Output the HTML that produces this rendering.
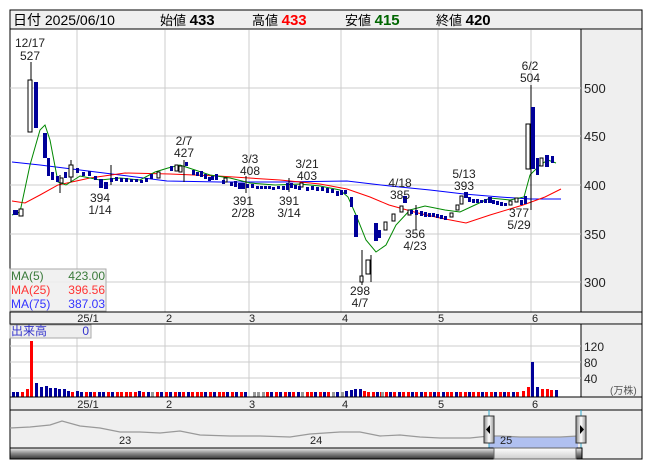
<!DOCTYPE html>
<html><head><meta charset="utf-8">
<style>
body{margin:0;width:653px;height:470px;background:#fff;overflow:hidden;font-family:"Liberation Sans","Noto Sans CJK JP",sans-serif}
svg text{font-family:"Liberation Sans","Noto Sans CJK JP",sans-serif}
</style></head><body>
<svg width="653" height="470" viewBox="0 0 653 470" xmlns="http://www.w3.org/2000/svg">
<defs>
<linearGradient id="sb" x1="0" y1="0" x2="0" y2="1"><stop offset="0" stop-color="#eee"/><stop offset="0.5" stop-color="#888"/><stop offset="1" stop-color="#333"/></linearGradient>
<linearGradient id="th" x1="0" y1="0" x2="0" y2="1"><stop offset="0" stop-color="#fff"/><stop offset="1" stop-color="#ccc"/></linearGradient>
<linearGradient id="hd" x1="0" y1="0" x2="1" y2="0"><stop offset="0" stop-color="#888"/><stop offset="0.5" stop-color="#fff"/><stop offset="1" stop-color="#999"/></linearGradient>
</defs>
<rect x="10" y="10" width="632" height="19" fill="#efefef" stroke="#000"/>
<text x="13" y="25" font-size="14">日付 2025/06/10</text>
<text x="160" y="25" font-size="13">始値 <tspan font-weight="bold" font-size="15">433</tspan></text>
<text x="252" y="25" font-size="13">高値 <tspan font-weight="bold" font-size="15" fill="#f00">433</tspan></text>
<text x="345" y="25" font-size="13">安値 <tspan font-weight="bold" font-size="15" fill="#060">415</tspan></text>
<text x="436" y="25" font-size="13">終値 <tspan font-weight="bold" font-size="15">420</tspan></text>
<rect x="10" y="29" width="632" height="283" fill="#fff" stroke="#000"/>
<rect x="581" y="30" width="60" height="282" fill="#efefef"/>
<line x1="581" y1="29" x2="581" y2="312" stroke="#000"/>
<g stroke="#ccc">
<line x1="77" y1="30" x2="77" y2="312"/><line x1="165" y1="30" x2="165" y2="312"/><line x1="249" y1="30" x2="249" y2="312"/><line x1="341" y1="30" x2="341" y2="312"/><line x1="438" y1="30" x2="438" y2="312"/><line x1="531" y1="30" x2="531" y2="312"/>
<line x1="10" y1="88" x2="581" y2="88"/><line x1="10" y1="136" x2="581" y2="136"/><line x1="10" y1="185" x2="581" y2="185"/><line x1="10" y1="234" x2="581" y2="234"/><line x1="10" y1="282" x2="581" y2="282"/>
</g>
<g font-size="13" fill="#222"><text x="584" y="93">500</text><text x="584" y="141">450</text><text x="584" y="190">400</text><text x="584" y="239">350</text><text x="584" y="287">300</text></g>
<polyline fill="none" stroke="#00f" stroke-width="1" points="12,162 40,165 80,170 120,175 167,181 220,182 280,182 347,181 390,186 430,190 464,194 500,197 530,199 561,199"/>
<polyline fill="none" stroke="#f00" stroke-width="1" points="12,201 25,203 40,195 58,185 90,178 125,173 170,174 218,176 280,180 320,184 347,189 370,197 389,205 418,213 440,218 466,223 490,215 523,205 545,197 561,189"/>
<polyline fill="none" stroke="#080" stroke-width="1" points="12,215 20,212 30,165 40,130 45,125 50,140 58,182 66,185 80,176 100,180 120,178 140,180 155,172 168,168 180,165 195,170 210,175 230,178 250,183 275,185 300,184 320,186 340,190 348,197 356,215 366,240 376,252 386,245 396,225 410,210 425,206 445,210 460,212 475,205 490,198 510,200 524,197 530,175 540,165 548,160 556,163"/>
<g stroke="#000" stroke-width="1">
<line x1="31" y1="62" x2="31" y2="132"/><line x1="531" y1="85" x2="531" y2="172"/><line x1="362" y1="250" x2="362" y2="285"/><line x1="371" y1="255" x2="371" y2="282"/><line x1="416" y1="205" x2="416" y2="230"/><line x1="531" y1="172" x2="531" y2="210"/><line x1="60" y1="175" x2="60" y2="193"/><line x1="71" y1="160" x2="71" y2="182"/><line x1="111" y1="165" x2="111" y2="185"/><line x1="184" y1="160" x2="184" y2="182"/><line x1="246" y1="176" x2="246" y2="193"/><line x1="289" y1="178" x2="289" y2="192"/>
</g>
<g fill="#fff" stroke="#000">
<rect x="19" y="209" width="4" height="7"/><rect x="28" y="80" width="4" height="52"/><rect x="366" y="260" width="4" height="14"/><rect x="360" y="276" width="3" height="6"/><rect x="526" y="124" width="4" height="45"/><rect x="69" y="165" width="4" height="12"/><rect x="60" y="178" width="3" height="5"/>
<rect x="175" y="165" width="3" height="6"/><rect x="400" y="206" width="3" height="6"/><rect x="460" y="196" width="3" height="8"/><rect x="456" y="205" width="3" height="5"/><rect x="515" y="198" width="3" height="4"/><rect x="540" y="158" width="3" height="8"/><rect x="384" y="222" width="3" height="8"/><rect x="392" y="214" width="3" height="7"/>
<rect x="157" y="172" width="3" height="6"/><rect x="179" y="166" width="3" height="6"/><rect x="224" y="178" width="3" height="4"/><rect x="300" y="183" width="3" height="4"/><rect x="408" y="210" width="3" height="5"/><rect x="450" y="213" width="3" height="4"/><rect x="509" y="201" width="3" height="4"/>
</g>
<g fill="#009">
<rect x="13" y="210" width="5" height="5"/><rect x="34" y="82" width="4" height="46"/><rect x="43" y="133" width="4" height="25"/><rect x="47" y="158" width="3" height="18"/><rect x="51" y="172" width="3" height="8"/><rect x="56" y="176" width="3" height="6"/>
<rect x="531" y="107" width="4" height="62"/><rect x="536" y="158" width="3" height="17"/><rect x="545" y="155" width="4" height="12"/><rect x="551" y="156" width="3" height="7"/>
<rect x="354" y="215" width="4" height="22"/><rect x="350" y="197" width="3" height="10"/><rect x="374" y="223" width="4" height="18"/><rect x="378" y="230" width="3" height="8"/><rect x="403" y="196" width="4" height="7"/><rect x="464" y="192" width="4" height="6"/><rect x="488" y="197" width="4" height="6"/>
</g>
<g fill="#009">
<rect x="76" y="168" width="3" height="5"/><rect x="82" y="172" width="3" height="4"/><rect x="88" y="171" width="3" height="5"/><rect x="94" y="176" width="3" height="4"/><rect x="99" y="179" width="4" height="9"/><rect x="104" y="182" width="4" height="7"/><rect x="110" y="178" width="3" height="4"/><rect x="120" y="178" width="3" height="4"/><rect x="130" y="179" width="3" height="3"/><rect x="140" y="180" width="3" height="3"/><rect x="150" y="174" width="3" height="5"/><rect x="185" y="162" width="3" height="4"/><rect x="192" y="170" width="3" height="5"/><rect x="200" y="171" width="3" height="6"/><rect x="208" y="177" width="3" height="4"/><rect x="215" y="174" width="3" height="6"/><rect x="222" y="180" width="3" height="4"/><rect x="230" y="182" width="3" height="4"/><rect x="238" y="183" width="4" height="6"/><rect x="246" y="184" width="3" height="4"/><rect x="256" y="186" width="3" height="3"/><rect x="264" y="186" width="3" height="3"/><rect x="272" y="187" width="3" height="3"/><rect x="282" y="186" width="3" height="4"/><rect x="290" y="183" width="3" height="5"/><rect x="298" y="186" width="3" height="4"/><rect x="306" y="187" width="3" height="4"/><rect x="316" y="187" width="3" height="4"/><rect x="326" y="188" width="3" height="5"/><rect x="336" y="191" width="3" height="5"/><rect x="344" y="190" width="3" height="4"/><rect x="410" y="210" width="3" height="4"/><rect x="420" y="211" width="3" height="5"/><rect x="428" y="213" width="3" height="4"/><rect x="436" y="214" width="3" height="4"/><rect x="444" y="216" width="3" height="4"/><rect x="472" y="199" width="3" height="4"/><rect x="480" y="200" width="3" height="3"/><rect x="496" y="201" width="3" height="4"/><rect x="504" y="203" width="3" height="3"/><rect x="520" y="200" width="3" height="5"/>
<rect x="64" y="172" width="3" height="6"/><rect x="115" y="177" width="3" height="4"/><rect x="125" y="178" width="3" height="4"/><rect x="135" y="179" width="3" height="3"/><rect x="145" y="178" width="3" height="4"/><rect x="170" y="166" width="3" height="5"/><rect x="196" y="172" width="3" height="4"/><rect x="204" y="174" width="3" height="5"/><rect x="211" y="176" width="3" height="4"/><rect x="234" y="181" width="3" height="6"/><rect x="242" y="183" width="3" height="6"/><rect x="251" y="184" width="3" height="4"/><rect x="260" y="186" width="3" height="3"/><rect x="268" y="186" width="3" height="3"/><rect x="277" y="186" width="3" height="3"/><rect x="286" y="183" width="3" height="7"/><rect x="294" y="185" width="3" height="4"/><rect x="311" y="186" width="3" height="4"/><rect x="321" y="187" width="3" height="4"/><rect x="331" y="189" width="3" height="4"/><rect x="340" y="190" width="3" height="5"/><rect x="415" y="210" width="3" height="5"/><rect x="424" y="212" width="3" height="5"/><rect x="432" y="213" width="3" height="4"/><rect x="440" y="215" width="3" height="4"/><rect x="468" y="197" width="3" height="5"/><rect x="476" y="199" width="3" height="4"/><rect x="484" y="199" width="3" height="4"/><rect x="492" y="200" width="3" height="4"/><rect x="500" y="202" width="3" height="4"/><rect x="524" y="196" width="3" height="8"/>
</g>
<g font-size="12" fill="#222" text-anchor="middle">
<text x="30" y="47">12/17</text><text x="30" y="60">527</text>
<text x="184" y="145">2/7</text><text x="184" y="157">427</text>
<text x="250" y="163">3/3</text><text x="250" y="175">408</text>
<text x="307" y="168">3/21</text><text x="307" y="180">403</text>
<text x="100" y="202">394</text><text x="100" y="214">1/14</text>
<text x="243" y="205">391</text><text x="243" y="217">2/28</text>
<text x="289" y="205">391</text><text x="289" y="217">3/14</text>
<text x="400" y="187">4/18</text><text x="400" y="199">385</text>
<text x="464" y="178">5/13</text><text x="464" y="190">393</text>
<text x="415" y="238">356</text><text x="415" y="250">4/23</text>
<text x="519" y="217">377</text><text x="519" y="229">5/29</text>
<text x="360" y="295">298</text><text x="360" y="307">4/7</text>
<text x="530" y="70">6/2</text><text x="530" y="82">504</text>
</g>
<rect x="10" y="269" width="96" height="42" fill="#eee" fill-opacity="0.85" stroke="#aaa"/>
<g font-size="12"><text x="11" y="280" fill="#3a7a3a">MA(5)</text><text x="105" y="280" fill="#3a7a3a" text-anchor="end">423.00</text>
<text x="11" y="294" fill="#f33">MA(25)</text><text x="105" y="294" fill="#f33" text-anchor="end">396.56</text>
<text x="11" y="308" fill="#33f">MA(75)</text><text x="105" y="308" fill="#33f" text-anchor="end">387.03</text></g>
<rect x="10" y="312" width="632" height="12" fill="#efefef" stroke="#000"/>
<g font-size="11" fill="#222" text-anchor="middle"><text x="88" y="322">25/1</text><text x="169" y="322">2</text><text x="252" y="322">3</text><text x="345" y="322">4</text><text x="441" y="322">5</text><text x="535" y="322">6</text></g>
<rect x="10" y="324" width="632" height="73" fill="#fff" stroke="#000"/>
<rect x="581" y="325" width="60" height="72" fill="#efefef"/>
<line x1="581" y1="324" x2="581" y2="397" stroke="#000"/>
<g stroke="#ccc"><line x1="77" y1="325" x2="77" y2="397"/><line x1="165" y1="325" x2="165" y2="397"/><line x1="249" y1="325" x2="249" y2="397"/><line x1="341" y1="325" x2="341" y2="397"/><line x1="438" y1="325" x2="438" y2="397"/><line x1="531" y1="325" x2="531" y2="397"/>
<line x1="10" y1="346" x2="581" y2="346"/><line x1="10" y1="362" x2="581" y2="362"/><line x1="10" y1="378" x2="581" y2="378"/></g>
<g font-size="12" fill="#222"><text x="584" y="351">120</text><text x="584" y="367">80</text><text x="584" y="383">40</text></g>
<text x="610" y="394" font-size="10" fill="#555">(万株)</text>
<g fill="#009">
<rect x="12" y="392" width="3" height="5"/><rect x="16" y="392" width="3" height="5"/><rect x="35" y="383" width="3" height="14"/><rect x="40" y="387" width="3" height="10"/><rect x="45" y="386" width="3" height="11"/><rect x="49" y="388" width="3" height="9"/><rect x="54" y="388" width="3" height="9"/><rect x="58" y="389" width="3" height="8"/><rect x="531" y="362" width="3" height="35"/><rect x="536" y="387" width="3" height="10"/><rect x="555" y="390" width="3" height="7"/>
</g>
<g fill="#f00"><rect x="21" y="392" width="3" height="5"/><rect x="26" y="389" width="3" height="8"/><rect x="30" y="341" width="3" height="56"/><rect x="527" y="387" width="3" height="10"/><rect x="522" y="391" width="3" height="6"/><rect x="541" y="389" width="3" height="8"/><rect x="546" y="389" width="3" height="8"/><rect x="550" y="390" width="3" height="7"/></g>
<g fill="#009">
<path d="M63 389h3v8h-3zM67 391h3v6h-3zM76 391h3v6h-3zM80 392h3v5h-3zM89 392h3v5h-3zM98 392h3v5h-3zM102 392h3v5h-3zM111 392h3v5h-3zM138 391h3v6h-3zM147 392h3v5h-3zM160 392h3v5h-3zM169 392h3v5h-3zM178 392h3v5h-3zM187 392h3v5h-3zM204 392h3v5h-3zM213 392h3v5h-3zM226 392h3v5h-3zM235 392h3v5h-3zM244 392h3v5h-3zM270 392h3v5h-3zM279 392h3v5h-3zM288 392h3v5h-3zM297 392h3v5h-3zM314 392h3v5h-3zM323 392h3v5h-3zM336 392h3v5h-3zM345 391h3v6h-3zM350 390h3v7h-3zM354 389h3v8h-3zM359 389h3v8h-3zM376 392h3v5h-3zM389 392h3v5h-3zM398 392h3v5h-3zM411 392h3v5h-3zM420 392h3v5h-3zM433 392h3v5h-3zM442 392h3v5h-3zM455 392h3v5h-3zM468 392h3v5h-3zM481 392h3v5h-3zM494 392h3v5h-3zM503 392h3v5h-3zM512 392h3v5h-3z"/>
</g>
<g fill="#f00">
<path d="M71 392h3v5h-3zM85 392h3v5h-3zM93 392h3v5h-3zM107 392h3v5h-3zM116 392h3v5h-3zM120 392h3v5h-3zM125 392h3v5h-3zM129 392h3v5h-3zM134 392h3v5h-3zM142 392h3v5h-3zM156 392h3v5h-3zM165 392h3v5h-3zM174 392h3v5h-3zM182 392h3v5h-3zM191 392h3v5h-3zM196 392h3v5h-3zM200 392h3v5h-3zM209 392h3v5h-3zM218 392h3v5h-3zM222 392h3v5h-3zM231 392h3v5h-3zM240 392h3v5h-3zM266 392h3v5h-3zM275 392h3v5h-3zM284 392h3v5h-3zM292 392h3v5h-3zM306 392h3v5h-3zM310 392h3v5h-3zM319 392h3v5h-3zM327 392h3v5h-3zM363 391h3v6h-3zM367 392h3v5h-3zM372 392h3v5h-3zM380 392h3v5h-3zM385 392h3v5h-3zM393 392h3v5h-3zM402 392h3v5h-3zM407 392h3v5h-3zM415 392h3v5h-3zM424 392h3v5h-3zM429 392h3v5h-3zM437 392h3v5h-3zM446 392h3v5h-3zM450 392h3v5h-3zM459 392h3v5h-3zM464 392h3v5h-3zM472 392h3v5h-3zM477 392h3v5h-3zM485 392h3v5h-3zM490 392h3v5h-3zM499 392h3v5h-3zM507 392h3v5h-3zM516 392h3v5h-3z"/>
</g>
<g fill="#999"><path d="M151 392h3v5h-3zM253 392h3v5h-3zM257 392h3v5h-3zM262 392h3v5h-3zM301 392h3v5h-3zM332 392h3v5h-3zM341 392h3v5h-3zM381 392h3v5h-3z"/></g>
<rect x="10" y="325" width="81" height="13" fill="#eee" stroke="#aaa"/>
<text x="11" y="335" font-size="12" fill="#33c">出来高</text><text x="89" y="335" font-size="12" fill="#33c" text-anchor="end">0</text>
<rect x="10" y="397" width="632" height="13" fill="#efefef" stroke="#000"/>
<g font-size="11" fill="#222" text-anchor="middle"><text x="88" y="408">25/1</text><text x="169" y="408">2</text><text x="252" y="408">3</text><text x="345" y="408">4</text><text x="441" y="408">5</text><text x="535" y="408">6</text></g>
<rect x="10" y="410" width="632" height="49" fill="#efefef" stroke="#000"/>
<polygon points="489,436 500,436 520,437 560,437 578,436 578,448 489,448" fill="#b0c0f0"/>
<polyline fill="none" stroke="#999" stroke-width="1.2" points="10,428 30,427 50,425 62,421 80,426 100,428 120,432 140,432 160,433 180,431 200,435 230,436 260,436 290,437 310,434 340,432 360,432 380,436 400,435 420,437 440,438 470,438 489,436 500,436 520,437 560,437 578,436"/>
<g font-size="11" fill="#222"><text x="119" y="444">23</text><text x="310" y="444">24</text><text x="500" y="444">25</text></g>
<line x1="489" y1="410" x2="489" y2="448" stroke="#3ac"/><line x1="581" y1="410" x2="581" y2="448" stroke="#3ac"/>
<rect x="484" y="416" width="10" height="27" fill="url(#hd)" stroke="#333"/><path d="M490,425 L486,429.5 L490,434Z" fill="#000"/>
<rect x="576" y="416" width="10" height="27" fill="url(#hd)" stroke="#333"/><path d="M580,425 L584,429.5 L580,434Z" fill="#000"/>
<rect x="10" y="448" width="572" height="11" fill="url(#sb)" stroke="#000"/>
<rect x="494" y="448" width="82" height="11" fill="url(#th)" stroke="#666"/>
</svg>
</body></html>
